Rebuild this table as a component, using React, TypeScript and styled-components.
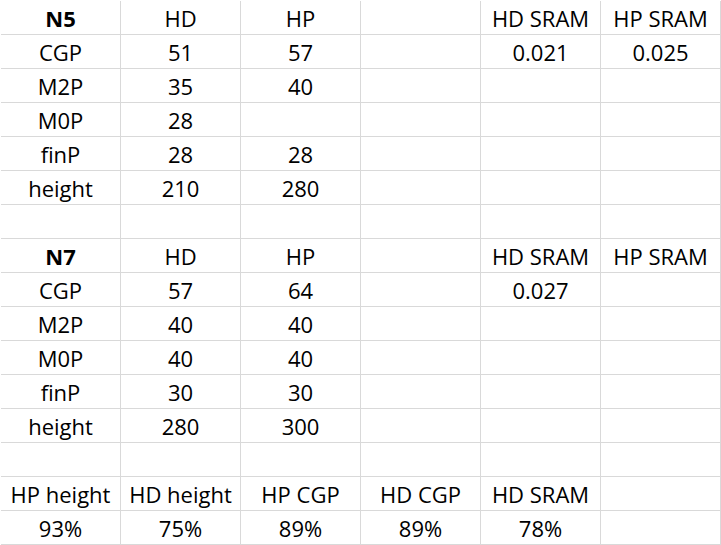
import React from 'react'
import styled, { createGlobalStyle } from 'styled-components'

const GlobalStyle = createGlobalStyle`
  html, body {
    margin: 0;
    padding: 0;
    background: #fff;
  }
  body {
    font-family: 'Open Sans', 'Liberation Sans', sans-serif;
    color: #000;
  }
`

const Sheet = styled.div`
  display: grid;
  grid-template-columns: repeat(6, 120px);
  grid-auto-rows: 34px;
  padding: 1px 0 0 1px;
  width: 721px;
  box-sizing: border-box;
  background: #fff;
`

const Cell = styled.div<{ $bold?: boolean }>`
  box-sizing: border-box;
  height: 34px;
  border-right: 1px solid #d9d9d9;
  border-bottom: 1px solid #d9d9d9;
  padding-top: 3px;
  font-size: 22px;
  line-height: 29px;
  text-align: center;
  white-space: nowrap;
  overflow: hidden;
  font-weight: ${p => (p.$bold ? 700 : 400)};
`

const rows: string[][] = [
  ['N5', 'HD', 'HP', '', 'HD SRAM', 'HP SRAM'],
  ['CGP', '51', '57', '', '0.021', '0.025'],
  ['M2P', '35', '40', '', '', ''],
  ['M0P', '28', '', '', '', ''],
  ['finP', '28', '28', '', '', ''],
  ['height', '210', '280', '', '', ''],
  ['', '', '', '', '', ''],
  ['N7', 'HD', 'HP', '', 'HD SRAM', 'HP SRAM'],
  ['CGP', '57', '64', '', '0.027', ''],
  ['M2P', '40', '40', '', '', ''],
  ['M0P', '40', '40', '', '', ''],
  ['finP', '30', '30', '', '', ''],
  ['height', '280', '300', '', '', ''],
  ['', '', '', '', '', ''],
  ['HP height', 'HD height', 'HP CGP', 'HD CGP', 'HD SRAM', ''],
  ['93%', '75%', '89%', '89%', '78%', '']
]

const boldCells = ['N5', 'N7']

function App() {
  return (
    <>
      <GlobalStyle />
      <Sheet>
        {rows.map((row, r) =>
          row.map((text, c) => (
            <Cell key={`${r}-${c}`} $bold={c === 0 && boldCells.includes(text)}>
              {text}
            </Cell>
          ))
        )}
      </Sheet>
    </>
  )
}

export default App
